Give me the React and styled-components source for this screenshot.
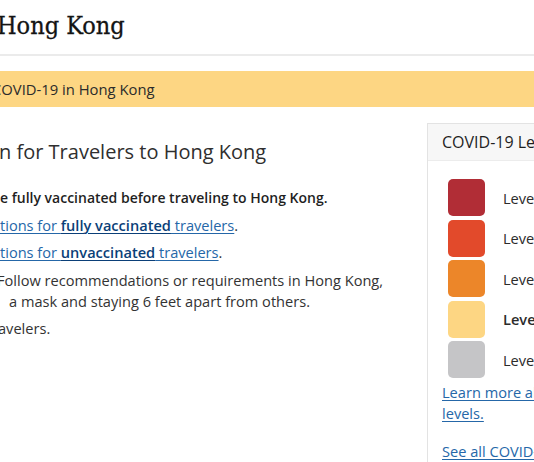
import React from "react";
import styled, { createGlobalStyle } from "styled-components";

const GlobalStyle = createGlobalStyle`
  html, body {
    margin: 0;
    padding: 0;
    background: #ffffff;
    overflow: hidden;
  }
  body {
    font-family: "Open Sans", "Noto Sans", Arial, sans-serif;
    color: #333333;
  }
`;

const Page = styled.div`
  width: 534px;
  height: 462px;
  overflow: hidden;
  display: flex;
  flex-direction: column;
  & > * {
    flex-shrink: 0;
  }
`;

const TitleBar = styled.header`
  height: 54px;
  border-bottom: 2px solid #ebebeb;
  display: flex;
  align-items: flex-start;
  box-sizing: content-box;
`;

const Title = styled.h1`
  margin: 9px 0 0 -3px;
  font-family: "DejaVu Serif Condensed", "DejaVu Serif", "Liberation Serif", serif;
  font-stretch: condensed;
  font-weight: 400;
  font-size: 25px;
  line-height: 34px;
  color: #141414;
  -webkit-text-stroke: 0.3px #141414;
  white-space: nowrap;
`;

const Banner = styled.div`
  margin-top: 15px;
  height: 36px;
  background: #fdd683;
  display: flex;
  align-items: center;
`;

const BannerText = styled.span`
  margin-left: -8px;
  font-size: 14.8px;
  color: #2b2b2b;
  white-space: nowrap;
`;

const Content = styled.div`
  margin-top: 16px;
  display: grid;
  grid-template-columns: 427px 280px;
  align-items: start;
`;

const Main = styled.main`
  padding-top: 15px;
  min-width: 0;
`;

const Heading = styled.h2`
  margin: 0 0 0 ${(p) => p.$shift || 0}px;
  font-size: 20px;
  font-weight: 400;
  line-height: 28px;
  color: #2f2f2f;
  white-space: nowrap;
`;

const List = styled.ul`
  list-style: none;
  margin: 21px 0 0 0;
  padding: 0;
  display: flex;
  flex-direction: column;
  gap: 6.5px;
`;

const Item = styled.li`
  margin-left: ${(p) => p.$shift || 0}px;
  font-size: ${(p) => (p.$strong ? 14 : 14.6)}px;
  line-height: 21px;
  font-weight: ${(p) => (p.$strong ? 600 : 400)};
  color: ${(p) => (p.$strong ? "#1f1f1f" : "#333333")};
  white-space: nowrap;
`;

const Indent = styled.span`
  display: inline-block;
  width: 12px;
`;

const Link = styled.a`
  color: #2567a8;
  text-decoration: underline;
  text-underline-offset: 2px;
  text-decoration-thickness: 1px;
`;

const StrongLink = styled(Link)`
  color: #0b3f78;
  font-weight: 600;
`;

const Sidebar = styled.aside`
  border: 1px solid #e3e3e3;
  border-right: none;
  background: #ffffff;
  height: 400px;
`;

const CardHeader = styled.div`
  height: 36px;
  background: #f7f7f7;
  border-bottom: 1px solid #ececec;
  display: flex;
  align-items: center;
  padding-left: 14px;
  font-size: 16px;
  color: #1f1f1f;
  white-space: nowrap;
`;

const CardBody = styled.div`
  padding: 18px 0 0 14px;
`;

const Levels = styled.ul`
  list-style: none;
  margin: 0;
  padding: 0 0 0 6px;
  display: flex;
  flex-direction: column;
  gap: 3.5px;
`;

const Level = styled.li`
  display: flex;
  align-items: center;
  gap: 18px;
  font-size: 14.6px;
  color: #2b2b2b;
  font-weight: ${(p) => (p.$current ? 600 : 400)};
  white-space: nowrap;
`;

const Swatch = styled.span`
  width: 37px;
  height: 37px;
  border-radius: 5px;
  background: ${(p) => p.$color};
  flex: none;
`;

const CardPara = styled.p`
  margin: ${(p) => p.$top}px 0 0 0;
  font-size: 14.6px;
  line-height: 21px;
  white-space: nowrap;
`;

const levels = [
  { color: "#b12d36", label: "Level 4 - Very High" },
  { color: "#e24a2b", label: "Level 3 - High" },
  { color: "#ec8629", label: "Level 2 - Moderate" },
  { color: "#fdd683", label: "Level 1 - Low", current: true },
  { color: "#c5c5c7", label: "Level Unknown" },
];

export default function App() {
  return (
    <>
      <GlobalStyle />
      <Page>
        <TitleBar>
          <Title>Hong Kong</Title>
        </TitleBar>
        <Banner>
          <BannerText>COVID-19 in Hong Kong</BannerText>
        </Banner>
        <Content>
          <Main>
            <Heading $shift={-1}>n for Travelers to Hong Kong</Heading>
            <List>
              <Item $strong $shift={0}>
                e fully vaccinated before traveling to Hong Kong.
              </Item>
              <Item $shift={0}>
                <Link href="#">tions for </Link>
                <StrongLink href="#">fully vaccinated</StrongLink>
                <Link href="#"> travelers</Link>.
              </Item>
              <Item $shift={0}>
                <Link href="#">tions for </Link>
                <StrongLink href="#">unvaccinated</StrongLink>
                <Link href="#"> travelers</Link>.
              </Item>
              <Item $shift={-3}>
                Follow recommendations or requirements in Hong Kong,
                <br />
                <Indent />a mask and staying 6 feet apart from others.
              </Item>
              <Item $shift={-2}>avelers.</Item>
            </List>
          </Main>
          <Sidebar>
            <CardHeader>COVID-19 Levels</CardHeader>
            <CardBody>
              <Levels>
                {levels.map((l) => (
                  <Level key={l.label} $current={l.current}>
                    <Swatch $color={l.color} />
                    {l.label}
                  </Level>
                ))}
              </Levels>
              <CardPara $top={4}>
                <Link href="#">Learn more about travel health notice</Link>
                <br />
                <Link href="#">levels.</Link>
              </CardPara>
              <CardPara $top={17}>
                <Link href="#">See all COVID-19 levels</Link>
              </CardPara>
            </CardBody>
          </Sidebar>
        </Content>
      </Page>
    </>
  );
}
